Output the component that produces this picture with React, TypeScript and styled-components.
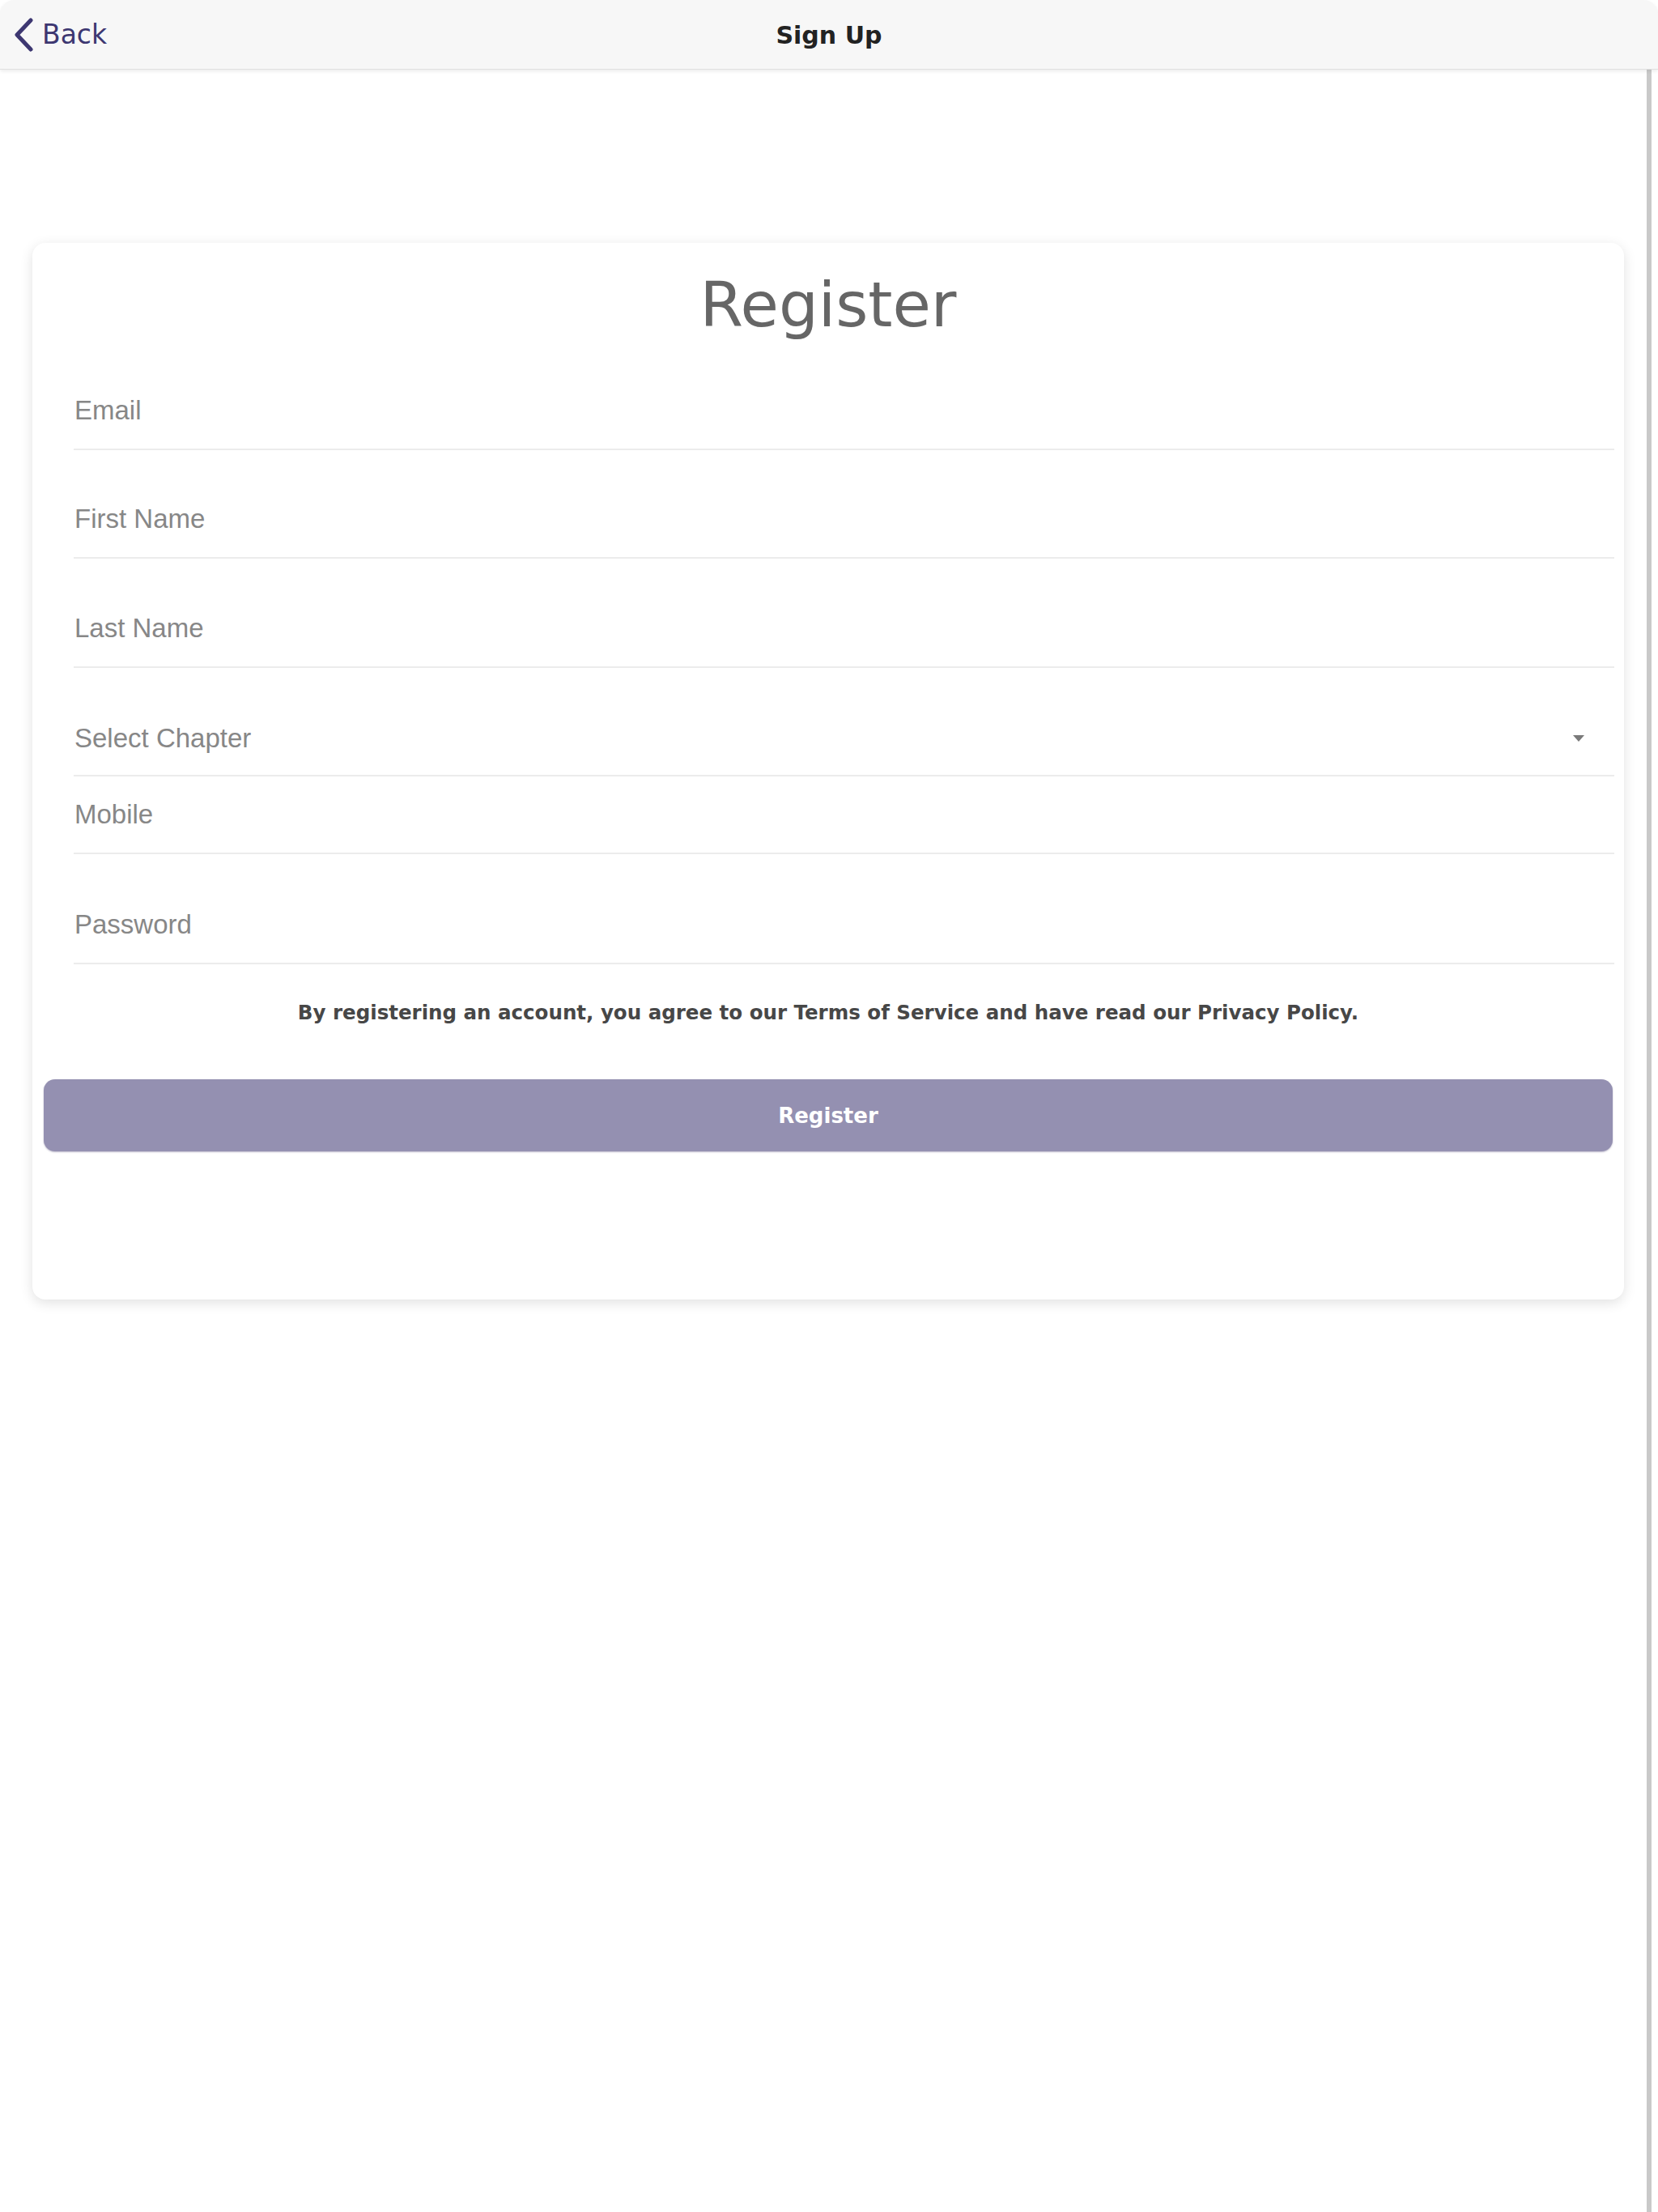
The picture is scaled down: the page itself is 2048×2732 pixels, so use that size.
import * as React from "react";
import styled, { createGlobalStyle } from "styled-components";

const GlobalStyle = createGlobalStyle`
  html, body {
    margin: 0;
    padding: 0;
    background: #fff;
  }
  body {
    font-family: "DejaVu Sans", "Liberation Sans", sans-serif;
  }
`;

const Page = styled.div`
  width: 2048px;
  min-height: 2732px;
  display: flex;
  flex-direction: column;
  background: #fff;
`;

const Header = styled.header`
  position: relative;
  z-index: 1;
  height: 85px;
  display: grid;
  grid-template-columns: 1fr auto 1fr;
  align-items: center;
  background: #f7f7f7;
  border-radius: 18px 18px 0 0;
  border-bottom: 1px solid #e0e0e0;
  box-shadow: 0 2px 4px rgba(0, 0, 0, 0.08);
`;

const BackButton = styled.button`
  justify-self: start;
  display: flex;
  align-items: center;
  gap: 10px;
  margin-left: 16px;
  padding: 0;
  border: none;
  background: none;
  color: #3d3771;
  font-family: "DejaVu Sans", sans-serif;
  font-size: 33px;
  cursor: pointer;
`;

const Title = styled.h1`
  margin: 2px 0 0;
  font-size: 30px;
  font-weight: 700;
  color: #222;
`;

// the screen area, with the grey edge on the right
const Screen = styled.main`
  flex: 1;
  width: 2040px;
  box-sizing: border-box;
  border-right: 6px solid #c9c9c9;
  padding: 214px 28px 0 40px;
`;

const Card = styled.section`
  background: #fff;
  border-radius: 16px;
  box-shadow: 0 4px 16px rgba(0, 0, 0, 0.12);
  padding: 38px 0 183px;
`;

const CardTitle = styled.h2`
  margin: 0 0 45px;
  text-align: center;
  font-size: 77px;
  line-height: 77px;
  font-weight: 400;
  color: #666;
`;

const FieldList = styled.div`
  display: flex;
  flex-direction: column;
  padding: 0 12px 0 51px;
`;

const Field = styled.label<{ $gap: number; $height?: number }>`
  display: flex;
  align-items: center;
  height: ${(p) => p.$height ?? 94}px;
  margin-top: ${(p) => p.$gap}px;
  border-bottom: 2px solid #ececec;
`;

const Input = styled.input`
  flex: 1;
  border: none;
  outline: none;
  background: transparent;
  padding: 0 0 0 1px;
  font-family: "Liberation Sans", Arial, sans-serif;
  font-size: 33px;
  color: #333;

  &::placeholder {
    color: #878787;
  }
`;

const SelectText = styled.span`
  flex: 1;
  padding-left: 1px;
  font-family: "Liberation Sans", Arial, sans-serif;
  font-size: 33px;
  color: #878787;
`;

const SelectArrow = styled.span`
  width: 0;
  height: 0;
  margin-right: 37px;
  border-left: 7px solid transparent;
  border-right: 7px solid transparent;
  border-top: 8px solid #7a7a7a;
`;

const Terms = styled.p`
  margin: 44px 0 0;
  text-align: center;
  font-size: 24.5px;
  line-height: 32px;
  font-weight: 700;
  color: #474747;
`;

const SubmitButton = styled.button`
  display: block;
  width: calc(100% - 28px);
  height: 89px;
  margin: 66px 14px 0;
  border: none;
  border-radius: 14px;
  background: #9490b1;
  box-shadow: 0 1px 2px rgba(60, 50, 100, 0.35);
  color: #fff;
  font-family: "DejaVu Sans", sans-serif;
  font-size: 26px;
  font-weight: 700;
  cursor: pointer;
`;

const Chevron = () => (
  <svg width="26" height="42" viewBox="0 0 26 42">
    <path
      d="M22 3 L5 21 L22 39"
      fill="none"
      stroke="#3d3771"
      strokeWidth="5"
      strokeLinecap="round"
      strokeLinejoin="round"
    />
  </svg>
);

type FieldDef = { placeholder: string; type: string; gap: number };

const fields: FieldDef[] = [
  { placeholder: "Email", type: "email", gap: 0 },
  { placeholder: "First Name", type: "text", gap: 38 },
  { placeholder: "Last Name", type: "text", gap: 39 },
];

const lowerFields: FieldDef[] = [
  { placeholder: "Mobile", type: "tel", gap: 0 },
  { placeholder: "Password", type: "password", gap: 40 },
];

const App: React.FC = () => {
  return (
    <Page>
      <GlobalStyle />
      <Header>
        <BackButton>
          <Chevron />
          Back
        </BackButton>
        <Title>Sign Up</Title>
        <span />
      </Header>
      <Screen>
        <Card>
          <CardTitle>Register</CardTitle>
          <FieldList>
            {fields.map((f) => (
              <Field key={f.placeholder} $gap={f.gap}>
                <Input type={f.type} placeholder={f.placeholder} />
              </Field>
            ))}
            <Field $gap={42} $height={90}>
              <SelectText>Select Chapter</SelectText>
              <SelectArrow />
            </Field>
            {lowerFields.map((f) => (
              <Field key={f.placeholder} $gap={f.gap}>
                <Input type={f.type} placeholder={f.placeholder} />
              </Field>
            ))}
          </FieldList>
          <Terms>
            By registering an account, you agree to our Terms of Service and
            have read our Privacy Policy.
          </Terms>
          <SubmitButton>Register</SubmitButton>
        </Card>
      </Screen>
    </Page>
  );
};

export default App;
